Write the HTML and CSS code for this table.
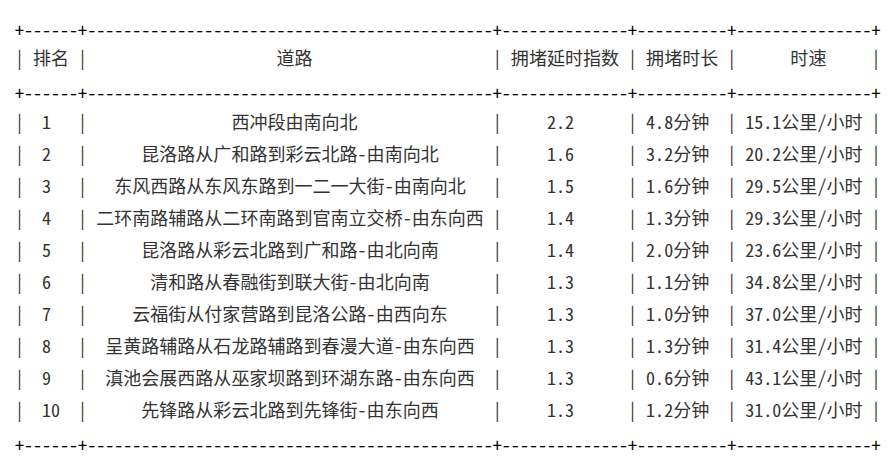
FILE: index.html
```html
<!DOCTYPE html>
<html lang="zh-CN">
<head>
<meta charset="utf-8">
<title>拥堵路段排行</title>
<link rel="stylesheet" href="styles.css">
</head>
<body>
<div class="ascii-table">
<div class="rule">+------+---------------------------------------------+--------------+----------+---------------+</div>
<div class="line">| 排名 |                     道路                    | 拥堵延时指数 | 拥堵时长 |      时速     |</div>
<div class="rule">+------+---------------------------------------------+--------------+----------+---------------+</div>
<div class="line">|  1   |                西冲段由南向北               |     2.2      | 4.8分钟  | 15.1公里/小时 |</div>
<div class="line">|  2   |      昆洛路从广和路到彩云北路-由南向北      |     1.6      | 3.2分钟  | 20.2公里/小时 |</div>
<div class="line">|  3   |   东风西路从东风东路到一二一大街-由南向北   |     1.5      | 1.6分钟  | 29.5公里/小时 |</div>
<div class="line">|  4   | 二环南路辅路从二环南路到官南立交桥-由东向西 |     1.4      | 1.3分钟  | 29.3公里/小时 |</div>
<div class="line">|  5   |      昆洛路从彩云北路到广和路-由北向南      |     1.4      | 2.0分钟  | 23.6公里/小时 |</div>
<div class="line">|  6   |       清和路从春融街到联大街-由北向南       |     1.3      | 1.1分钟  | 34.8公里/小时 |</div>
<div class="line">|  7   |     云福街从付家营路到昆洛公路-由西向东     |     1.3      | 1.0分钟  | 37.0公里/小时 |</div>
<div class="line">|  8   |  呈黄路辅路从石龙路辅路到春漫大道-由东向西  |     1.3      | 1.3分钟  | 31.4公里/小时 |</div>
<div class="line">|  9   |  滇池会展西路从巫家坝路到环湖东路-由东向西  |     1.3      | 0.6分钟  | 43.1公里/小时 |</div>
<div class="line">|  10  |      先锋路从彩云北路到先锋街-由东向西      |     1.3      | 1.2分钟  | 31.0公里/小时 |</div>
<div class="rule">+------+---------------------------------------------+--------------+----------+---------------+</div>
</div>
</body>
</html>
```

FILE: styles.css
```css
html, body {
  margin: 0;
  padding: 0;
  background: #ffffff;
}

.ascii-table {
  margin: 10px 0 0 0;
  padding-left: 15px;
  font-family: "Noto Sans Mono CJK SC", "Noto Sans CJK SC", monospace;
  font-size: 18.04px;
  color: #333333;
}

.line {
  height: 32px;
  line-height: 32px;
  white-space: pre;
}

.line:nth-child(2) {
  height: 31px;
  line-height: 30px;
}

.rule {
  height: 26px;
  line-height: 26px;
  padding-top: 6px;
  white-space: pre;
  color: #000000;
}
```
